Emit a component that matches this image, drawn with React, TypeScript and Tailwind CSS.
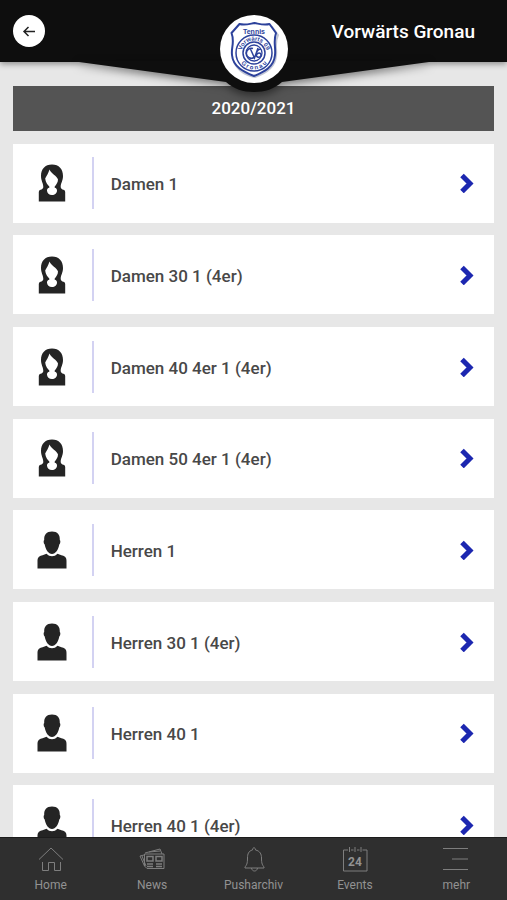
import { ReactNode } from 'react';

type Team = {
  name: string;
  gender: 'w' | 'm';
};

const teams: Team[] = [
  { name: 'Damen 1', gender: 'w' },
  { name: 'Damen 30 1 (4er)', gender: 'w' },
  { name: 'Damen 40 4er 1 (4er)', gender: 'w' },
  { name: 'Damen 50 4er 1 (4er)', gender: 'w' },
  { name: 'Herren 1', gender: 'm' },
  { name: 'Herren 30 1 (4er)', gender: 'm' },
  { name: 'Herren 40 1', gender: 'm' },
  { name: 'Herren 40 1 (4er)', gender: 'm' },
];

const WomanIcon = () => (
  <svg viewBox="0 0 30 38" className="h-[38px] w-[30px] fill-[#242424]" aria-hidden="true">
    <path
      fillRule="evenodd"
      d="M15 0.500C8 0.500 4 5 4 12C4 17 6.300 19 6.300 23C6.300 24.500 5 25.500 3.500 25.700Q1.800 26.200 1.800 28V37.500H28.200V28Q28.200 26.200 26.500 25.700C25 25.500 23.700 24.500 23.700 23C23.700 19 26 17 26 12C26 5 22 0.500 15 0.500ZM12.500 5.500C14 9.500 20 12 21 15.500C21 18.500 19 21 17.700 22.500V23.700C19.300 24 20 25 20 26.500C20 29 18 31 15 31S10 29 10 26.500C10 25 10.700 24 12.300 23.700V22.500C10.500 21 8.500 18 8.200 14.500C9.500 12 11.500 9 12.500 5.500Z"
    />
  </svg>
);

const ManIcon = () => (
  <svg viewBox="0 0 30 38" className="h-[38px] w-[30px] fill-[#242424]" aria-hidden="true">
    <path d="M15 0.500C9.500 0.500 7 3.500 7.200 9C6.300 9.500 6.500 12.500 7.700 13.500C8.500 18.500 11.500 23 15 23S21.500 18.500 22.300 13.500C23.500 12.500 23.700 9.500 22.800 9C23 3.500 20.500 0.500 15 0.500Z" />
    <path d="M9.500 22.800C11 24.500 13 25.300 15 25.300S19 24.500 20.500 22.800C23 24.200 26 24.300 28 25.800C29.300 27 29.500 28.500 29.500 30.500V37.500H0.500V30.500C0.500 28.500 0.700 27 2 25.800C4 24.300 7 24.200 9.500 22.800Z" />
  </svg>
);

const ClubLogo = () => (
  <svg viewBox="0 0 68 68" className="size-[68px]" fill="none" role="img" aria-label="Tennis Vorwärts 09 Gronau">
    <defs>
      <path id="arcTop" d="M21.500 38A12.500 12.500 0 0 1 46.500 38" />
      <path id="arcBottom" d="M17.500 38A16.500 16.500 0 0 0 50.500 38" />
    </defs>
    <path
      d="M21 11C26 12 30 11 36 10C43 12 48 13 52 12L58 20C54 28 57 34 56 41C55 53 44 59 35 62C24 60 14 53 13 42"
      stroke="#9aa0b8"
      strokeWidth="2"
      opacity="0.6"
    />
    <path
      d="M19.500 9C25 10.500 29 9 34.500 8C40 9 44 10.500 49.500 9L56 18C53 27 56 32 55 40C54 52 44 57 34 61C24 57 13 52 12 40C11 32 15 27 11.500 18Z"
      fill="#fff"
      stroke="#2c419b"
      strokeWidth="2"
      strokeLinejoin="round"
    />
    <g stroke="#2c419b">
      <circle cx="34" cy="38" r="18" strokeWidth="1.500" />
      <circle cx="34" cy="38" r="11" strokeWidth="1.500" />
      <circle cx="34" cy="38" r="8" strokeWidth="1.300" />
      <path d="M33 33.500A5 5 0 1 0 34 42.500M30 33L34.500 43L38 33M41 34C37 34 36 38 36.500 41C38 43.500 41.500 42 41 39.500C40.500 37.500 37.500 37.500 36.500 40" strokeWidth="1.500" />
    </g>
    <g fill="#2c419b" fontFamily="Liberation Sans, sans-serif" fontWeight="bold">
      <text x="34" y="19" fontSize="7" textAnchor="middle">
        Tennis
      </text>
      <text fontSize="6" textAnchor="middle">
        <textPath href="#arcTop" startOffset="50%">
          Vorwärts 09
        </textPath>
      </text>
      <text fontSize="6" textAnchor="middle">
        <textPath href="#arcBottom" startOffset="50%">
          G r o n a u
        </textPath>
      </text>
    </g>
  </svg>
);

const Header = () => (
  <header className="relative z-10 flex h-[62px] shrink-0 items-center justify-between bg-[#0e0e0e] pr-8 pl-[13px] shadow-[0_2px_6px_rgba(0,0,0,0.4)]">
    {/* pennant hanging below the bar */}
    <svg
      viewBox="0 0 350 32"
      className="absolute top-full left-1/2 h-8 w-[350px] -translate-x-1/2 overflow-visible fill-[#0e0e0e] drop-shadow-[0_3px_4px_rgba(0,0,0,0.5)]"
      aria-hidden="true"
    >
      <path d="M0 -1H350V0L203 20C195 27 186 30 175 30S155 27 147 20L0 0Z" />
    </svg>

    <button
      type="button"
      aria-label="Zurück"
      className="flex size-8 items-center justify-center rounded-full bg-white"
    >
      <svg viewBox="0 0 14 14" className="size-[14px]" fill="none" stroke="#222" strokeWidth="1.500" aria-hidden="true">
        <path d="M13 7.500H2M6.500 3L2 7.500L6.500 12" />
      </svg>
    </button>

    <a
      href="#home"
      className="absolute top-[15px] left-1/2 flex size-[68px] -translate-x-1/2 items-center justify-center rounded-full bg-white"
    >
      <ClubLogo />
    </a>

    <h1 className="pt-0.5 text-[19px] font-medium text-white">Vorwärts Gronau</h1>
  </header>
);

const TeamRow = ({ name, gender }: Team) => (
  <li>
    <a href="#team" className="flex h-[79px] items-center bg-white">
      <span className="flex w-[79px] shrink-0 justify-center">
        {gender === 'w' ? <WomanIcon /> : <ManIcon />}
      </span>
      <span className="h-[52px] w-0.5 bg-[#d3d2f2]" />
      <span className="flex-1 pt-1 pl-[17px] text-[17px] font-medium text-[#484848]">{name}</span>
      <svg
        viewBox="0 0 14 20"
        className="mr-5 h-5 w-[14px]"
        fill="none"
        stroke="#1c27b0"
        strokeWidth="5"
        aria-hidden="true"
      >
        <path d="M2 2.500L10 10.500L2 18.500" />
      </svg>
    </a>
  </li>
);

const NavItem = ({ label, children }: { label: string; children: ReactNode }) => (
  <a href="#nav" className="flex flex-1 flex-col items-center gap-1 pt-[9px] text-xs text-[#929292]">
    <svg
      viewBox="0 0 26 26"
      className="size-[26px]"
      fill="none"
      stroke="#7e7e7e"
      strokeWidth="1"
      aria-hidden="true"
    >
      {children}
    </svg>
    {label}
  </a>
);

const BottomNav = () => (
  <nav className="relative z-10 flex h-[63px] shrink-0 border-t border-[#1c1c1c] bg-[#2f2f2f]">
    <NavItem label="Home">
      <path d="M1 12.500L13 1L25 12.500M4.500 15V23.500H10.500V15.500H16.500V23.500H22.500V15" />
    </NavItem>
    <NavItem label="News">
      <path d="M5.500 7H25V21.500H8L5.500 19ZM5.500 19L1 9L5 8M3 9L7 19M6 6L21 2L23 7M10 5L21 4" />
      <path d="M8 9.500H14V14H8ZM17 9.500H23V14H17ZM8 17H14M8 19.500H14M17 17H23M17 19.500H23" strokeWidth="1.500" />
    </NavItem>
    <NavItem label="Pusharchiv">
      <path d="M11.500 3C11.500 0 14.500 0 14.500 3C19 4 20.500 7 20.500 11C20.500 17 21.500 18 23 20V21H4V20C5.500 18 6.500 17 6.500 11C6.500 7 7.500 4 11.500 3ZM10.500 21C11 25 16 25 16.500 21" />
    </NavItem>
    <NavItem label="Events">
      <path d="M6 3H1.500V24H25V3H20.500M9 3H11.500M15 3H17.500M7.500 0V5M13 0V5M19 0V5" />
      <text x="13" y="19" fontSize="12" fontWeight="bold" textAnchor="middle" fill="#929292" stroke="none">
        24
      </text>
    </NavItem>
    <NavItem label="mehr">
      <path d="M0 1.500H25M9 12H25M0 22.500H25" strokeWidth="1" />
    </NavItem>
  </nav>
);

export default function App() {
  return (
    <div className="flex h-screen flex-col overflow-hidden bg-[#e7e7e7] font-['Roboto',sans-serif]">
      <Header />
      <main className="flex min-h-0 flex-1 flex-col gap-[2.5vw] overflow-y-auto px-[2.5%] pt-6 [scrollbar-width:none]">
        <h2 className="flex h-[45px] shrink-0 items-center justify-center bg-[#545454] text-[17px] font-medium text-white">
          2020/2021
        </h2>
        <ul className="flex flex-col gap-[2.5vw] pb-[2.5vw]">
          {teams.map((team) => (
            <TeamRow key={team.name} {...team} />
          ))}
        </ul>
      </main>
      <BottomNav />
    </div>
  );
}
